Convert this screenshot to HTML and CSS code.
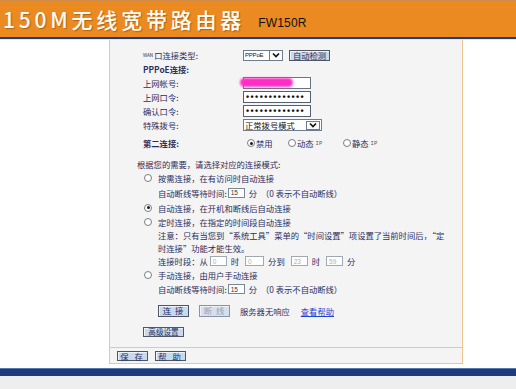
FILE: index.html
```html
<!DOCTYPE html>
<html lang="zh-CN">
<head>
<meta charset="utf-8">
<title>150M无线宽带路由器</title>
<link rel="stylesheet" href="styles.css">
</head>
<body>
<header class="top">
  <span class="title">150M无线宽带路由器</span>
  <span class="model">FW150R</span>
</header>
<div class="rule"></div>
<div class="main">
  <div class="panel">
    <div class="content">
      <div class="row"><span class="lbl"><small class="wan">WAN</small>口连接类型:</span><span class="select sel-sm"><span class="sel-text pppoe">PPPoE</span><span class="arrow"><svg width="8" height="6" viewBox="0 0 8 6"><path d="M1 1.5 L4 4.5 L7 1.5" fill="none" stroke="#111" stroke-width="1.6"/></svg></span></span><span class="btn detect">自动检测</span></div>
      <div class="row"><b class="lbl">PPPoE连接:</b></div>
      <div class="row"><span class="lbl">上网帐号:</span><span class="input pw acct"><span class="blob"></span></span></div>
      <div class="row"><span class="lbl">上网口令:</span><span class="input pw">•••••••••••••</span></div>
      <div class="row"><span class="lbl">确认口令:</span><span class="input pw">•••••••••••••</span></div>
      <div class="row"><span class="lbl">特殊拨号:</span><span class="select sel-lg"><span class="sel-text">正常拨号模式</span><span class="arrow"><svg width="8" height="6" viewBox="0 0 8 6"><path d="M1 1.5 L4 4.5 L7 1.5" fill="none" stroke="#111" stroke-width="1.6"/></svg></span></span></div>
      <div class="row second"><b class="lbl">第二连接:</b><span class="opt o1"><i class="radio on"></i>禁用</span><span class="opt o2"><i class="radio"></i>动态 <span class="ip">IP</span></span><span class="opt"><i class="radio"></i>静态 <span class="ip">IP</span></span></div>
      <div class="row hint">根据您的需要，请选择对应的连接模式:</div>
      <div class="row"><i class="radio mode"></i>按需连接，在有访问时自动连接</div>
      <div class="row sub tall">自动断线等待时间:<span class="input num">15</span><span class="unit">分</span>（0 表示不自动断线）</div>
      <div class="row tall"><i class="radio mode on"></i>自动连接，在开机和断线后自动连接</div>
      <div class="row"><i class="radio mode"></i>定时连接，在指定的时间段自动连接</div>
      <div class="note">注意：只有当您到“系统工具”菜单的“时间设置”项设置了当前时间后，“定<br>时连接”功能才能生效。</div>
      <div class="row sub">连接时段：从<span class="input tm off">0</span><span class="unit">时</span><span class="input tm off w2">0</span><span class="unit">分到</span><span class="input tm off">23</span><span class="unit">时</span><span class="input tm off">59</span><span class="unit">分</span></div>
      <div class="row"><i class="radio mode"></i>手动连接，由用户手动连接</div>
      <div class="row sub">自动断线等待时间:<span class="input num">15</span><span class="unit">分</span>（0 表示不自动断线）</div>
      <div class="row sub actions"><span class="btn act">连 接</span><span class="btn act disabled">断 线</span><span class="status-msg">服务器无响应</span><a class="help" href="#">查看帮助</a></div>
      <div class="row adv"><span class="btn advbtn">高级设置</span></div>
    </div>
    <div class="foot"><span class="btn fbtn">保 存</span><span class="btn fbtn">帮 助</span></div>
  </div>
</div>
<div class="bar"></div>
<div class="statusbar"></div>
</body>
</html>
```
FILE: styles.css
```css
* { box-sizing: border-box; margin: 0; padding: 0; }
body {
  width: 516px;
  height: 389px;
  overflow: hidden;
  background: #ffffff;
  font-family: "Noto Sans CJK SC", "Noto Sans", sans-serif;
  font-size: 8.3px;
  color: #2d2d5c;
}
.top {
  height: 37px;
  background: #ea8a20;
  border-top: 1px solid #d08c4a;
  display: flex;
  align-items: center;
  padding-left: 3px;
}
.title {
  color: #fdfbf6;
  font-size: 21px;
  font-weight: 500;
  letter-spacing: 3.8px;
  line-height: 1;
  text-shadow: 1px 1px 1px rgba(110, 55, 0, 0.45);
}
.model {
  font-family: "Liberation Sans", Arial, sans-serif;
  font-size: 12px;
  color: #111;
  margin-left: 13px;
  margin-top: 7px;
  letter-spacing: 0.2px;
}
.rule {
  height: 3px;
  background: #1f3e78;
  border-bottom: 1px solid #dfe8f0;
}
.main { height: 328px; }
.panel {
  margin-left: 109px;
  width: 354px;
  height: 324px;
  background: #f4f4f4;
  border-left: 1px solid #f0c48c;
  border-right: 1px solid #f0c48c;
  border-bottom: 1px solid #f0c48c;
  display: flex;
  flex-direction: column;
}
.content {
  height: 307px;
  padding: 8px 0 0 33px;
}
.row {
  display: flex;
  align-items: center;
  height: 14px;
  white-space: nowrap;
}
.row.tall { height: 15px; }
.lbl { width: 100px; flex: none; display: flex; align-items: center; }
b.lbl { font-weight: 700; }
.wan { font-size: 4.6px; margin-right: 1px; }

.select {
  display: flex;
  align-items: center;
  background: #fff;
  border: 1px solid #6e7c8e;
  height: 11px;
}
.sel-sm { width: 40px; }
.sel-lg { width: 79px; height: 12px; }
.sel-text { flex: 1; padding-left: 1px; color: #111; line-height: 1; }
.pppoe { font-family: "Liberation Sans", sans-serif; font-size: 6px; letter-spacing: -0.2px; }
.arrow {
  width: 13px;
  height: 100%;
  border-left: 1px solid #6e7c8e;
  display: flex;
  align-items: center;
  justify-content: center;
  background: #fafafa;
}
.sel-lg .arrow { width: 14px; margin-right: 1px; height: 9px; border: 1px solid #6e7c8e; }

.btn {
  display: inline-flex;
  align-items: center;
  justify-content: center;
  background: #c9d8ea;
  border: 1px solid #4e5666;
  box-shadow: inset 1px 1px 0 #eef3fa;
  color: #243066;
  line-height: 1;
}
.detect { width: 41px; height: 11px; margin-left: 6px; }

.input {
  display: inline-flex;
  align-items: center;
  background: #fff;
  border: 1px solid #55606e;
  position: relative;
}
.pw {
  width: 68px;
  height: 12px;
  padding-left: 2px;
  font-family: "Liberation Sans", sans-serif;
  font-size: 9px;
  font-weight: 700;
  letter-spacing: 1.4px;
  color: #111;
  line-height: 1;
}
.acct { border-color: #6a7482; }
.blob {
  position: absolute;
  left: -4px;
  top: 0;
  width: 53px;
  height: 9px;
  background: #ff2fc6;
  border-radius: 5px;
  filter: blur(1.2px);
}

.second { margin-top: 4px; }
.opt { display: flex; align-items: center; flex: none; }
.o1 { width: 45px; padding-left: 4px; }
.o2 { width: 55px; }
.ip { font-family: "Liberation Mono", monospace; font-size: 5.5px; color: #555; margin-left: 2px; }

.radio {
  display: inline-block;
  flex: none;
  width: 8px;
  height: 8px;
  border-radius: 50%;
  border: 1px solid #7d7d7d;
  background: #fff;
  margin-right: 1px;
  position: relative;
}
.radio.on::after {
  content: "";
  position: absolute;
  left: 1.5px;
  top: 1.5px;
  width: 3px;
  height: 3px;
  border-radius: 50%;
  background: #1a1a1a;
}
.radio.mode { margin-left: 1px; margin-right: 6px; }

.hint { margin-top: 7px; margin-left: -6px; }
.sub { padding-left: 15px; }
.num {
  width: 17px;
  height: 10px;
  margin-left: 1px;
  padding-left: 2px;
  font-size: 6.5px;
  color: #333;
  border-color: #7a8796;
  font-family: "Liberation Sans", sans-serif;
}
.unit { margin: 0 4px; }
.tm {
  width: 17px;
  height: 10px;
  padding-left: 2px;
  font-size: 6.5px;
  font-family: "Liberation Sans", sans-serif;
  border-color: #a0a8b2;
  color: #b0b0b0;
  margin-left: 2px;
}
.tm.w2 { width: 19px; }

.note {
  padding-left: 15px;
  line-height: 12.5px;
  height: 25px;
}

.actions { margin-top: 8px; height: 13px; }
.act { width: 31px; height: 12px; margin-right: 10px; letter-spacing: 1px; }
.act.disabled { background: #d6e0eb; color: #9aa3b6; border-color: #8a93a3; }
.status-msg { margin-left: 0; }
.help { color: #1a44d4; margin-left: 11px; text-decoration: underline; }

.adv { margin-top: 9px; height: 12px; }
.advbtn { width: 41px; height: 10px; font-size: 7.6px; }

.foot {
  height: 16px;
  border-top: 1px solid #f0c48c;
  padding: 3px 0 0 7px;
  display: flex;
  align-items: flex-start;
  gap: 7px;
}
.fbtn { width: 31px; height: 10px; letter-spacing: 2px; }

.bar {
  height: 8px;
  background: #1d3c7c;
  border-top: 1px solid #5877ad;
}
.statusbar {
  height: 13px;
  background: #efeeee;
}
```
